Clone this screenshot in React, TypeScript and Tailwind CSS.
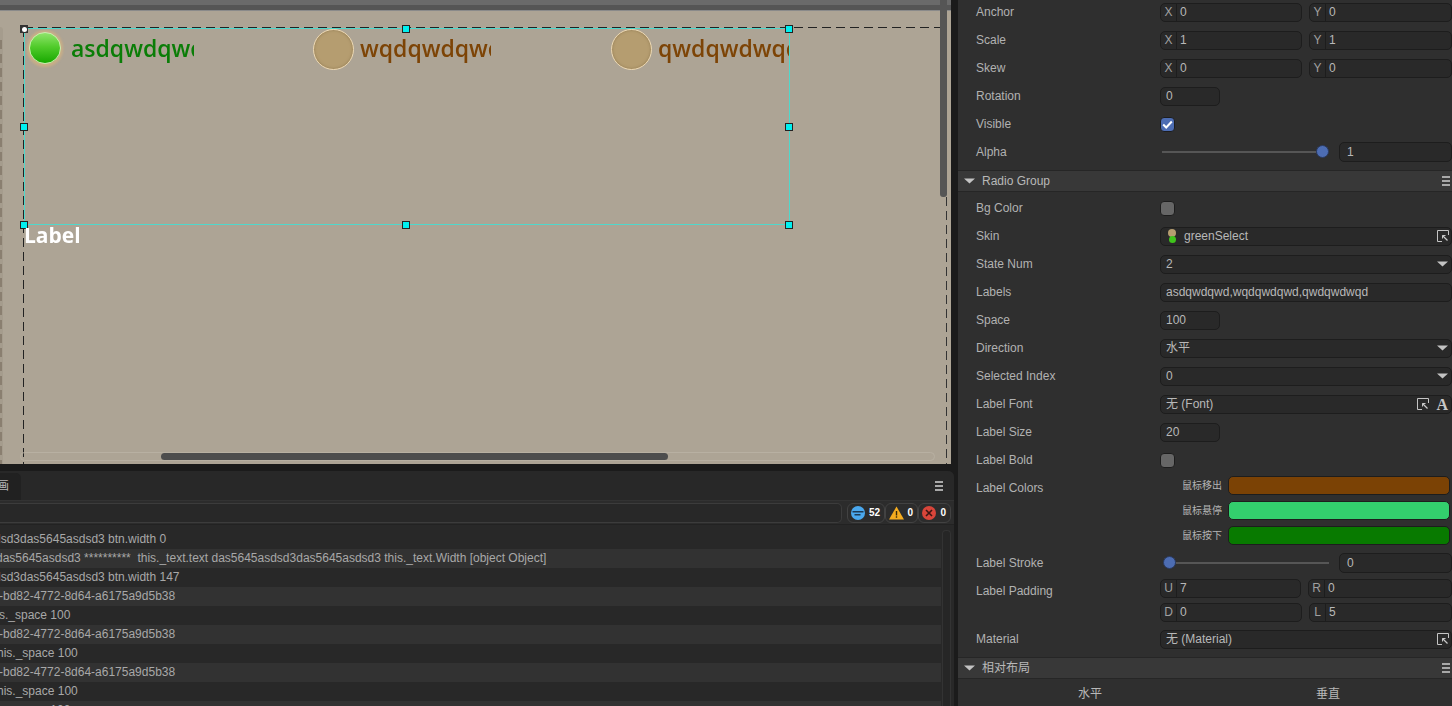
import type { ReactNode } from "react";

const FONT = "font-['Liberation_Sans','Noto_Sans_CJK_SC',sans-serif]";

const logRows = [
  { text: "dsd3das5645asdsd3 btn.width 0", offset: "-ml-[6px]" },
  { text: "das5645asdsd3 ********** \u00a0this._text.text das5645asdsd3das5645asdsd3 this._text.Width [object Object]", offset: "-ml-[4px]" },
  { text: "dsd3das5645asdsd3 btn.width 147", offset: "-ml-[6px]" },
  { text: "-bd82-4772-8d64-a6175a9d5b38", offset: "-ml-[1px]" },
  { text: "s._space 100", offset: "-ml-[1px]" },
  { text: "-bd82-4772-8d64-a6175a9d5b38", offset: "-ml-[1px]" },
  { text: "his._space 100", offset: "-ml-[3px]" },
  { text: "-bd82-4772-8d64-a6175a9d5b38", offset: "-ml-[1px]" },
  { text: "his._space 100", offset: "-ml-[3px]" },
  { text: "s._space 100", offset: "-ml-[1px]" },
];

// Square resize handle of the selection box
function Handle({ className }: { className: string }) {
  return <div className={`absolute w-[8px] h-[8px] bg-[#00f0f0] border border-[#222] ${className}`} />;
}

function MenuIcon() {
  return (
    <div className="flex flex-col gap-[2px] w-[8px]">
      <div className="h-[2px] bg-[#a8a8a8]" />
      <div className="h-[2px] bg-[#a8a8a8]" />
      <div className="h-[2px] bg-[#a8a8a8]" />
    </div>
  );
}

function Arrow({ className = "" }: { className?: string }) {
  return (
    <svg width="11" height="6" viewBox="0 0 11 6" className={className}>
      <path d="M0 0.5h11L5.5 5.5z" fill="#c4c4c4" />
    </svg>
  );
}

function LinkIcon() {
  return (
    <svg width="12" height="12" viewBox="0 0 12 12" className="shrink-0">
      <path d="M11.5 5V.5H.5v11H5" fill="none" stroke="#c4c4c4" strokeWidth="1" />
      <path d="M5.5 5.5l5 5" stroke="#c8c8c8" strokeWidth="1.2" />
      <path d="M5.5 8.5v-3h3" fill="none" stroke="#c8c8c8" strokeWidth="1" />
    </svg>
  );
}

function Row({ label, children, height = "h-[28px]" }: { label: string; children?: ReactNode; height?: string }) {
  return (
    <div className={`flex items-center ${height}`}>
      <div className="w-[202px] pl-[18px] shrink-0 text-[#b2b2b2]">{label}</div>
      <div className="flex-1 min-w-0 flex items-center">{children}</div>
    </div>
  );
}

function Field({ children, className = "flex-1" }: { children?: ReactNode; className?: string }) {
  return (
    <div className={`h-[19px] flex items-center px-[5px] rounded-[5px] bg-[#292929] border border-[#1d1d1d] text-[#b8b8b8] whitespace-nowrap ${className}`}>
      {children}
    </div>
  );
}

function Prefixed({ prefix, value, className }: { prefix: string; value: string; className: string }) {
  return (
    <div className={`h-[19px] flex items-center rounded-[5px] bg-[#292929] border border-[#1d1d1d] text-[#b8b8b8] ${className}`}>
      <span className="w-[16px] shrink-0 text-center text-[#a0a0a0] border-r border-[#1d1d1d] h-full leading-[17px]">{prefix}</span>
      <span className="pl-[3px]">{value}</span>
    </div>
  );
}

function Pair({ label, a, b }: { label: string; a: string; b: string }) {
  return (
    <Row label={label}>
      <div className="flex gap-[7px] w-full">
        <Prefixed prefix="X" value={a} className="w-[142px]" />
        <Prefixed prefix="Y" value={b} className="flex-1" />
      </div>
    </Row>
  );
}

function Select({ label, value }: { label: string; value: string }) {
  return (
    <Row label={label}>
      <Field className="flex-1 justify-between pr-[3px]">
        <span>{value}</span>
        <Arrow />
      </Field>
    </Row>
  );
}

function Check({ checked = false }: { checked?: boolean }) {
  return (
    <div className={`w-[15px] h-[15px] rounded-[4px] border border-[#1d1d1d] flex items-center justify-center ${checked ? "bg-[#4d6db3]" : "bg-[#666666]"}`}>
      {checked && (
        <svg width="11" height="9" viewBox="0 0 11 9">
          <path d="M1.2 4.5l3 3 5.6-6" fill="none" stroke="#fff" strokeWidth="2" />
        </svg>
      )}
    </div>
  );
}

function Slider({ label, value, thumbRight }: { label: string; value: string; thumbRight: boolean }) {
  return (
    <Row label={label}>
      <div className="w-[167px] ml-[2px] mr-[10px] h-[13px] flex items-center shrink-0 -mt-[2px]">
        <div className={`w-[13px] h-[13px] rounded-full bg-[#4d6db3] border border-[#2a3a60] shrink-0 ${thumbRight ? "order-2" : "ml-[1px]"}`} />
        <div className={`flex-1 h-[2px] bg-[#565656] mt-[1px] ${thumbRight ? "order-1" : ""}`} />
      </div>
      <Field className="flex-1 h-[20px] pl-[7px]">{value}</Field>
    </Row>
  );
}

function SectionHeader({ title }: { title: string }) {
  return (
    <div className="h-[22px] flex items-center bg-[#383838] border-y border-[#262626] pl-[6px] pr-[2px] text-[#b8b8b8]">
      <Arrow className="mr-[7px] shrink-0" />
      <span className="flex-1">{title}</span>
      <MenuIcon />
    </div>
  );
}

function ColorRow({ label, color }: { label: string; color: string }) {
  return (
    <div className="h-[25px] flex items-center">
      <div className="w-[270px] pr-[6px] shrink-0 text-right text-[10px] text-[#b4b4b4]">{label}</div>
      <div className={`w-[222px] h-[19px] rounded-[5px] border border-[#1d1d1d] ${color}`} />
    </div>
  );
}

function Badge({ icon, count, className }: { icon: ReactNode; count: string; className: string }) {
  return (
    <div className={`h-[20px] flex items-center justify-between px-[3px] rounded-[6px] border border-[#424242] text-white text-[10px] font-bold ${className}`}>
      {icon}
      <span className="pr-[1px]">{count}</span>
    </div>
  );
}

function RadioLabel({ text, className }: { text: string; className: string }) {
  return (
    <div className={`absolute top-[32px] h-[34px] overflow-hidden text-[23px] leading-[33px] font-semibold whitespace-nowrap blur-[0.3px] font-['Open_Sans',sans-serif] ${className}`}>
      {text}
    </div>
  );
}

function Canvas() {
  return (
    <div className="relative h-[464px] bg-[#ada495] overflow-hidden">
      <div className="h-[11px] bg-[linear-gradient(#6a6a6a_0,#6a6a6a_5px,#555_5px,#555_10px,#8a8a8a_10px)]" />

      {/* stage outline */}
      <div className="absolute left-[23px] top-[28px] bottom-0 w-px bg-[repeating-linear-gradient(180deg,#222_0,#222_9px,transparent_9px,transparent_14px)]" />
      <div className="absolute left-[24px] top-[27px] w-[916px] h-px bg-[repeating-linear-gradient(90deg,#222_0,#222_9px,transparent_9px,transparent_14px)]" />
      <div className="absolute left-[946px] top-[197px] bottom-0 w-px bg-[repeating-linear-gradient(180deg,#333_0,#333_9px,transparent_9px,transparent_14px)]" />
      <div className="absolute left-0 top-[27px] bottom-0 w-[3px] rounded-tr-[3px] bg-[#a59c8d]" />
      <div className="absolute left-0 top-[40px] bottom-0 w-[2px] bg-[repeating-linear-gradient(180deg,#8a7f70_0,#8a7f70_9px,transparent_9px,transparent_14px)]" />

      {/* radio items */}
      <div className="absolute left-[27px] top-[30px] w-[36px] h-[37px] rounded-full bg-[#c9ae86] blur-[1px]" />
      <div className="absolute left-[29px] top-[32px] w-[32px] h-[32px] rounded-full border border-[#c8f0b0] bg-[linear-gradient(#8fe46c,#52cc2c_45%,#18a800)]" />
      <RadioLabel text="asdqwdqwd" className="left-[71px] w-[123px] text-[#0a7d07]" />

      <div className="absolute left-[313px] top-[29px] w-[41px] h-[41px] rounded-full bg-[#b59d70] border border-[#ecd8b4] shadow-[inset_0_0_3px_#8f7850]" />
      <RadioLabel text="wqdqwdqwd" className="left-[360px] w-[131px] text-[#7d4406]" />

      <div className="absolute left-[611px] top-[29px] w-[41px] h-[41px] rounded-full bg-[#b59d70] border border-[#ecd8b4] shadow-[inset_0_0_3px_#8f7850]" />
      <RadioLabel text="qwdqwdwqd" className="left-[658px] w-[131px] text-[#7d4406]" />

      {/* selection box */}
      <div className="absolute left-[24px] top-[28px] w-[766px] h-[197px] border border-[#4fd8cc]" />
      <div className="absolute left-[20px] top-[25px] w-[8px] h-[8px] bg-[#333] flex items-center justify-center">
        <div className="w-[5px] h-[5px] rounded-full bg-white" />
      </div>
      <Handle className="left-[402px] top-[25px]" />
      <Handle className="left-[785px] top-[25px]" />
      <Handle className="left-[20px] top-[123px]" />
      <Handle className="left-[785px] top-[123px]" />
      <Handle className="left-[20px] top-[221px]" />
      <Handle className="left-[402px] top-[221px]" />
      <Handle className="left-[785px] top-[221px]" />

      <div className="absolute left-[24px] top-[221px] text-[21px] leading-[28px] font-bold text-white blur-[0.3px] font-['Open_Sans',sans-serif]">Label</div>

      {/* scrollbars */}
      <div className="absolute left-[940px] top-0 w-[7px] h-[197px] rounded-b-[3px] bg-[#555555]" />
      <div className="absolute left-[20px] top-[452px] w-[915px] h-[9px] rounded-full border border-[#b8b0a2]" />
      <div className="absolute left-[161px] top-[453px] w-[507px] h-[7px] rounded-full bg-[#4d4d4d]" />
    </div>
  );
}

function Console() {
  return (
    <div className="h-[235px] mt-[7px] w-[954px] rounded-tr-[6px] bg-[#282828] overflow-hidden flex flex-col">
      <div className="h-[30px] flex items-end justify-between bg-[#282828] border-b border-[#333]">
        <div className="w-[21px] h-[27px] rounded-tr-[5px] bg-[#212121] overflow-hidden text-[12px] leading-[27px] text-[#b8b8b8]">
          <span className="block -ml-[3px]">画</span>
        </div>
        <div className="mr-[11px] mb-[9px]"><MenuIcon /></div>
      </div>
      <div className="h-[24px] flex items-center bg-[#2c2c2c] border-b border-[#222] pr-[3px]">
        <div className="w-[842px] h-[20px] rounded-r-[5px] border border-l-0 border-[#3c3c3c] bg-[#282828] mr-[5px]" />
        <Badge
          className="w-[38px]"
          count="52"
          icon={
            <svg width="14" height="14" viewBox="0 0 14 14" className="shrink-0">
              <circle cx="7" cy="7" r="7" fill="#4aa8ee" />
              <path d="M1.5 5h11v1.6h-11zM3.5 8h6v1.6h-6z" fill="#1d3a55" />
            </svg>
          }
        />
        <Badge
          className="w-[33px]"
          count="0"
          icon={
            <svg width="15" height="14" viewBox="0 0 15 14" className="shrink-0">
              <path d="M7.5 0.5L15 13.5H0z" fill="#f5ac1f" />
              <path d="M6.8 5h1.4v4.5H6.8zM6.8 10.3h1.4v1.4H6.8z" fill="#3a2a08" />
            </svg>
          }
        />
        <Badge
          className="w-[33px]"
          count="0"
          icon={
            <svg width="14" height="14" viewBox="0 0 14 14" className="shrink-0">
              <circle cx="7" cy="7" r="7" fill="#d8453a" />
              <path d="M4 4l6 6M10 4l-6 6" stroke="#3a1512" strokeWidth="1.6" />
            </svg>
          }
        />
      </div>
      <div className="flex flex-1 pt-[5px] min-h-0">
        <div className="w-[941px] text-[12px] leading-[19px] text-[#a8a8a8]">
          {logRows.map((row, i) => (
            <div key={i} className={`h-[19px] overflow-hidden whitespace-pre ${i % 2 === 1 ? "bg-[#323232]" : "bg-[#282828]"}`}>
              <div className={row.offset}>{row.text}</div>
            </div>
          ))}
        </div>
        <div className="ml-[1px] w-[9px] rounded-t-[4px] border border-[#333] border-b-0 bg-[#262626]" />
      </div>
    </div>
  );
}

function Inspector() {
  return (
    <div className="w-[494px] h-[706px] overflow-hidden bg-[#2f2f2f] text-[12px]">
      <div className="-mt-[2px]">
        <Pair label="Anchor" a="0" b="0" />
        <Pair label="Scale" a="1" b="1" />
        <Pair label="Skew" a="0" b="0" />
        <Row label="Rotation"><Field className="w-[60px]">0</Field></Row>
        <Row label="Visible"><Check checked /></Row>
        <Slider label="Alpha" value="1" thumbRight />
      </div>
      <div className="mt-[4px] mb-[2px]"><SectionHeader title="Radio Group" /></div>

      <Row label="Bg Color"><Check /></Row>
      <Row label="Skin">
        <Field className="flex-1 justify-between pl-[7px] pr-[2px]">
          <span className="flex items-center">
            <span className="flex flex-col items-center mr-[8px] w-[8px]">
              <span className="w-[8px] h-[8px] rounded-full bg-[#b59d70]" />
              <span className="w-[7px] h-[7px] rounded-full bg-[#3fc41c] -mt-[1px]" />
            </span>
            greenSelect
          </span>
          <LinkIcon />
        </Field>
      </Row>
      <Select label="State Num" value="2" />
      <Row label="Labels"><Field>asdqwdqwd,wqdqwdqwd,qwdqwdwqd</Field></Row>
      <Row label="Space"><Field className="w-[60px]">100</Field></Row>
      <Select label="Direction" value="水平" />
      <Select label="Selected Index" value="0" />
      <Row label="Label Font">
        <Field className="flex-1 justify-between pr-[3px]">
          <span>无 (Font)</span>
          <span className="flex items-center gap-[7px]">
            <LinkIcon />
            <span className="font-['Liberation_Serif',serif] font-bold text-[16px] leading-[15px] text-[#c8c8c8]">A</span>
          </span>
        </Field>
      </Row>
      <Row label="Label Size"><Field className="w-[60px]">20</Field></Row>
      <Row label="Label Bold"><Check /></Row>

      <div className="relative h-[75px] -mt-[1px] mb-[1px]">
        <div className="absolute left-[18px] top-[6px] text-[#b2b2b2]">Label Colors</div>
        <ColorRow label="鼠标移出" color="bg-[#7b4205]" />
        <ColorRow label="鼠标悬停" color="bg-[#33cf6d]" />
        <ColorRow label="鼠标按下" color="bg-[#087a00]" />
      </div>

      <Slider label="Label Stroke" value="0" thumbRight={false} />

      <div className="relative h-[48px] -mt-[1px] mb-[1px]">
        <div className="absolute left-[18px] top-[6px] text-[#b2b2b2]">Label Padding</div>
        <div className="ml-[202px] h-[24px] flex items-center gap-[7px]">
          <Prefixed prefix="U" value="7" className="w-[141px]" />
          <Prefixed prefix="R" value="0" className="flex-1" />
        </div>
        <div className="ml-[202px] h-[24px] flex items-center gap-[7px]">
          <Prefixed prefix="D" value="0" className="w-[142px]" />
          <Prefixed prefix="L" value="5" className="flex-1" />
        </div>
      </div>

      <Row label="Material">
        <Field className="flex-1 justify-between pr-[2px]">
          <span>无 (Material)</span>
          <LinkIcon />
        </Field>
      </Row>

      <div className="mt-[4px]"><SectionHeader title="相对布局" /></div>
      <div className="flex h-[30px] items-center text-[#b8b8b8]">
        <div className="w-[264px] text-center">水平</div>
        <div className="w-[212px] text-center">垂直</div>
      </div>
    </div>
  );
}

export default function App() {
  return (
    <div className={`w-[1452px] h-[706px] overflow-hidden flex bg-[#1b1b1b] ${FONT}`}>
      <div className="w-[958px] shrink-0">
        <div className="w-[951px]"><Canvas /></div>
        <Console />
      </div>
      <Inspector />
    </div>
  );
}
